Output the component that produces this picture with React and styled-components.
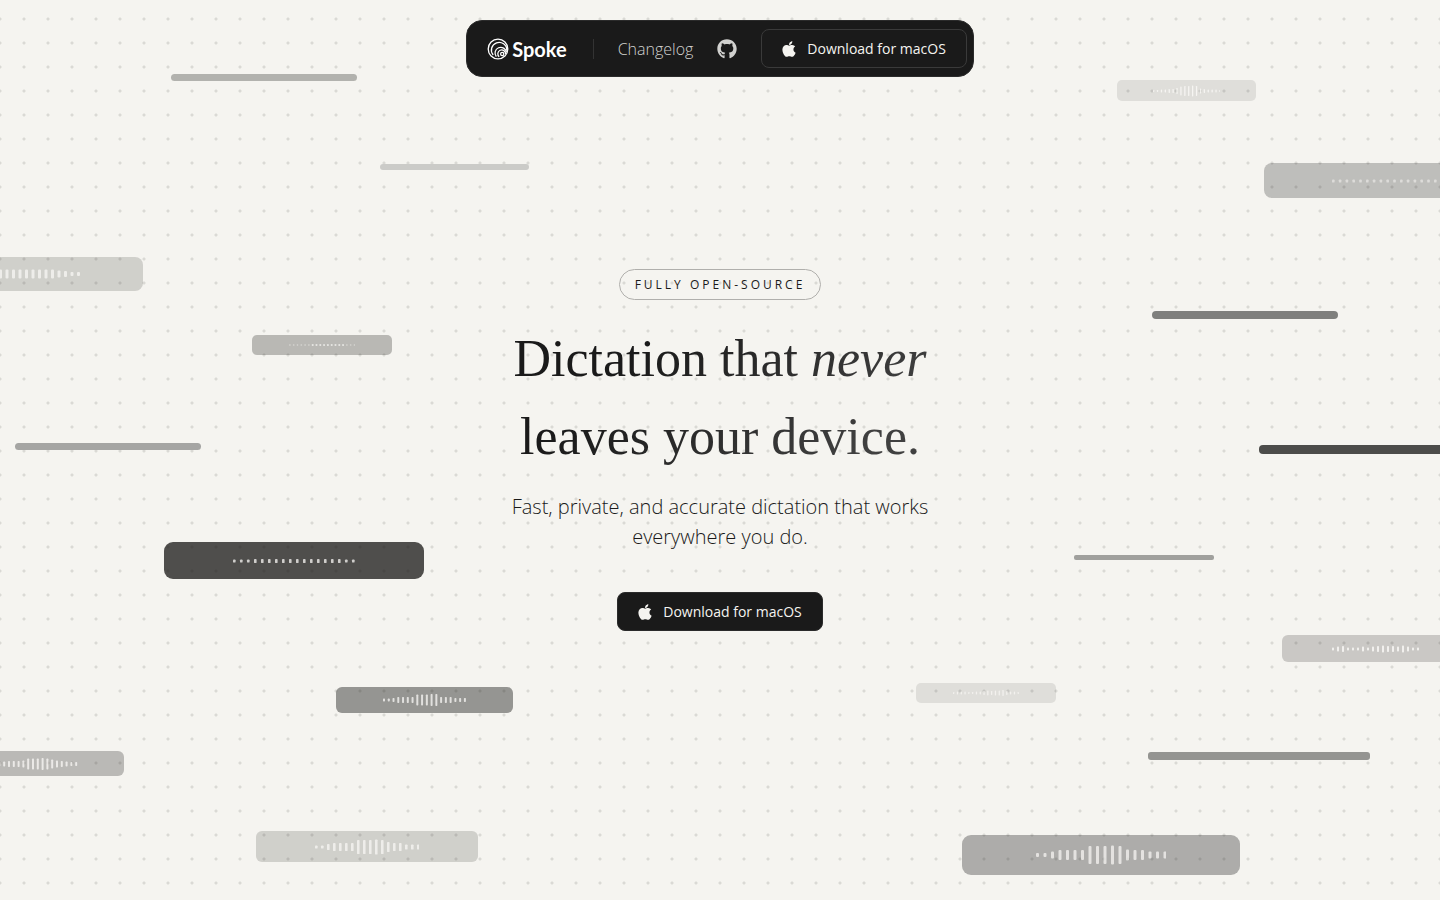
import React from "react";
import styled, { createGlobalStyle } from "styled-components";
import { FaApple, FaGithub } from "react-icons/fa";

// x and w are measured from the centre of the stage, y from its top
const CAPSULES = [
  { x: -549, y: 74, w: 186, h: 7, r: 4, tone: "#b2b2ae" },
  { x: -340, y: 164, w: 149, h: 6, r: 3, tone: "#cbcbc8" },
  { x: -705, y: 443, w: 186, h: 7, r: 4, tone: "#a5a5a3" },
  { x: 432, y: 311, w: 186, h: 8, r: 4, tone: "#7f7f7d" },
  { x: 539, y: 445, w: 223, h: 9, r: 4, tone: "#4c4c4a" },
  { x: 354, y: 555, w: 140, h: 5, r: 2, tone: "#a0a09d" },
  { x: 428, y: 752, w: 222, h: 8, r: 3, tone: "#949491" },
  { x: 397, y: 80, w: 139, h: 21, r: 5, ink: 0.1, step: 3.9, bar: 1.3, wave: [2, 2, 3, 3, 4, 4, 6, 9, 10, 10, 11, 10, 5, 4, 3, 3, 3, 2], alpha: 0.8 },
  { x: 544, y: 163, w: 260, h: 35, r: 8, ink: 0.25, step: 6.8, bar: 2.6, wave: [3, 3, 3, 3, 3, 3, 3, 3, 3, 3, 3, 3, 3, 3, 3, 3, 3, 3, 3], alpha: 0.5 },
  { x: -837, y: 257, w: 260, h: 34, r: 8, ink: 0.17, step: 6.5, bar: 3, wave: [4, 4, 4, 6, 6, 8, 8, 9, 9, 9, 9, 9, 9, 9, 9, 9, 9, 7, 6, 4, 4], alpha: 0.7 },
  { x: -468, y: 335, w: 140, h: 20, r: 5, ink: 0.28, step: 3.8, bar: 1.8, wave: [1, 1, 1, 1, 1, 1, 2, 2, 2, 2, 2, 2, 2, 2, 2, 1, 1, 1], alpha: 0.65 },
  { x: -556, y: 542, w: 260, h: 37, r: 9, ink: 0.77, step: 7, bar: 2.6, wave: [3, 3, 3, 4, 4, 4, 4, 4, 4, 4, 4, 4, 4, 4, 4, 4, 3, 3], alpha: 0.75 },
  { x: -384, y: 687, w: 177, h: 26, r: 6, ink: 0.44, step: 4.76, bar: 2, wave: [3, 3, 4, 6, 6, 6, 6, 11, 11, 11, 12, 12, 6, 6, 6, 4, 4, 4], alpha: 0.75 },
  { x: 562, y: 635, w: 186, h: 27, r: 6, ink: 0.2, step: 5, bar: 2, wave: [3, 5, 6, 3, 3, 3, 5, 3, 5, 6, 7, 6, 6, 5, 7, 5, 3, 3], alpha: 0.8 },
  { x: 196, y: 683, w: 140, h: 20, r: 5, ink: 0.1, step: 3.8, bar: 1.3, wave: [2, 3, 3, 3, 2, 2, 3, 3, 4, 5, 4, 5, 5, 6, 4, 3, 3, 2], alpha: 0.7 },
  { x: -782, y: 751, w: 186, h: 25, r: 6, ink: 0.27, step: 4.8, bar: 2, wave: [3, 3, 3, 4, 5, 6, 6, 6, 7, 11, 11, 11, 12, 11, 9, 7, 6, 5, 4, 4], alpha: 0.75 },
  { x: -464, y: 831, w: 222, h: 31, r: 6, ink: 0.17, step: 6, bar: 2.6, wave: [3, 3, 6, 8, 8, 8, 8, 14, 14, 14, 15, 14, 10, 8, 8, 5, 5, 5], alpha: 0.7 },
  { x: 242, y: 835, w: 278, h: 40, r: 9, ink: 0.33, step: 7.5, bar: 3, wave: [4, 4, 7, 10, 10, 10, 10, 18, 18, 18, 19, 18, 11, 10, 10, 7, 7, 7], alpha: 0.7 },
];

const GlobalStyle = createGlobalStyle`
  * {
    box-sizing: border-box;
  }
  body {
    margin: 0;
    background: #f5f4f0;
    color: #1a1a1a;
    font-family: "Open Sans", sans-serif;
  }
`;

const Page = styled.div`
  position: relative;
  display: flex;
  flex-direction: column;
  align-items: center;
  min-height: 100vh;
  padding: 20px;
  overflow: hidden;
  background-color: #f5f4f0;
  background-image: radial-gradient(circle, #dad9d5 1px, transparent 2px);
  background-size: 24px 24px;
  background-position: -12px 7px;
`;

const Stage = styled.div`
  position: absolute;
  top: 0;
  left: 50%;
`;

const Capsule = styled.div`
  position: absolute;
  display: flex;
  align-items: center;
  justify-content: center;
  background: ${({ $tone, $ink }) => $tone || `rgba(28, 27, 26, ${$ink})`};
`;

const Header = styled.header`
  position: relative;
  display: flex;
  align-items: center;
  gap: 24px;
  padding: 8px 6px 8px 20px;
  border: 1px solid #2b2b2b;
  border-radius: 16px;
  background: #1a1a1a;
`;

const Brand = styled.a`
  display: flex;
  align-items: center;
  gap: 3px;
  padding-right: 2px;
  color: #ffffff;
  font-family: Lato, sans-serif;
  font-size: 20px;
  font-weight: 700;
  line-height: 24px;
  text-decoration: none;
`;

const Divider = styled.span`
  width: 1px;
  height: 20px;
  background: #333333;
`;

const NavLink = styled.a`
  display: flex;
  color: #d1d1cf;
  font-size: 16px;
  font-weight: 300;
  line-height: 24px;
  text-decoration: none;
`;

const Download = styled.a`
  display: flex;
  align-items: center;
  gap: 9px;
  height: 39px;
  padding: 0 20px 0 18px;
  border: 1px solid ${({ $outlined }) => ($outlined ? "#3a3a3a" : "#2b2b2b")};
  border-radius: 8px;
  background: #1a1a1a;
  color: #f5f4f0;
  font-size: 14px;
  line-height: 20px;
  text-decoration: none;
`;

const Hero = styled.main`
  position: relative;
  display: flex;
  flex-direction: column;
  align-items: center;
  padding-top: 192px;
  text-align: center;
`;

const Badge = styled.span`
  padding: 7px 15px;
  border: 1px solid #b0afac;
  border-radius: 16px;
  font-size: 12px;
  line-height: 15px;
  letter-spacing: 3px;
  text-transform: uppercase;
`;

const Title = styled.h1`
  max-width: 480px;
  margin: 20px 0 0;
  background: linear-gradient(135deg, #1a1a1a 30%, #404040 80%);
  background-clip: text;
  color: transparent;
  font-family: "Liberation Serif", serif;
  font-size: 52px;
  font-weight: 400;
  line-height: 78px;
`;

const Lead = styled.p`
  max-width: 448px;
  margin: 16px 0 40px;
  font-size: 20px;
  font-weight: 300;
  line-height: 30px;
`;

const LogoMark = () => (
  <svg width="22" height="22" viewBox="0 0 22 22" fill="none" stroke="#fff" strokeWidth="1.3" aria-hidden="true">
    <circle cx="11" cy="11" r="9.8" />
    <path d="M6.2 17A7.7 7.7 0 1 1 19.8 12.2" />
    <path d="M9.3 18.6A5.7 5.7 0 1 1 19.4 14.4" />
    <path d="M12.2 18.8A3.9 3.9 0 1 1 18.6 16" />
    <circle cx="15.2" cy="16" r="1.6" />
  </svg>
);

const Wave = ({ wave, step, bar, alpha }) => {
  const width = (wave.length - 1) * step + bar;
  return (
    <svg width={width} height="20" viewBox={`0 0 ${width} 20`} aria-hidden="true">
      {wave.map((h, i) => (
        <rect key={i} x={i * step} y={10 - h / 2} width={bar} height={h} rx={bar / 3} fill="#fbfaf7" opacity={alpha} />
      ))}
    </svg>
  );
};

const DownloadLink = ({ outlined }) => (
  <Download href="#download" $outlined={outlined}>
    <FaApple size={18} />
    Download for macOS
  </Download>
);

const App = () => {
  return (
    <Page>
      <GlobalStyle />
      <Stage aria-hidden="true">
        {CAPSULES.map((c, i) => (
          <Capsule
            key={i}
            $tone={c.tone}
            $ink={c.ink}
            style={{ left: c.x, top: c.y, width: c.w, height: c.h, borderRadius: c.r }}
          >
            {c.wave && <Wave wave={c.wave} step={c.step} bar={c.bar} alpha={c.alpha} />}
          </Capsule>
        ))}
      </Stage>
      <Header>
        <Brand href="#home">
          <LogoMark />
          Spoke
        </Brand>
        <Divider />
        <NavLink href="#changelog">Changelog</NavLink>
        <NavLink href="#github" aria-label="GitHub">
          <FaGithub size={20} />
        </NavLink>
        <DownloadLink outlined />
      </Header>
      <Hero>
        <Badge>Fully open-source</Badge>
        <Title>
          Dictation that <em>never</em> leaves your device.
        </Title>
        <Lead>Fast, private, and accurate dictation that works everywhere you do.</Lead>
        <DownloadLink />
      </Hero>
    </Page>
  );
};

export default App;
